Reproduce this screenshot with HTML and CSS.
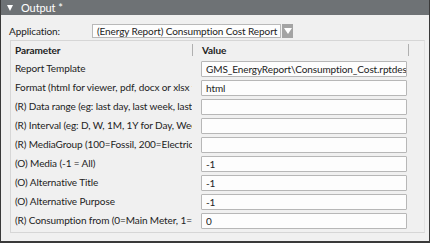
FILE: index.html
```html
<!DOCTYPE html>
<html lang="en">
<head>
<meta charset="UTF-8">
<meta name="viewport" content="width=device-width, initial-scale=1.0">
<title>Output</title>
<link rel="stylesheet" href="styles.css">
</head>
<body>

<div class="panel">
    <div class="panel-header">
        <span class="caret"></span>
        <span>Output *</span>
    </div>
    <div class="panel-body">
        <div class="app-row">
            <label class="app-label">Application:</label>
            <div class="select">
                <span class="select-text">(Energy Report) Consumption Cost Report</span>
                <span class="select-btn"><span class="select-arrow"></span></span>
            </div>
        </div>

        <div class="grid">
            <div class="grid-head">
                <div class="cell-name">Parameter</div>
                <div class="cell-value">Value</div>
            </div>
            <div class="grid-row">
                <div class="cell-name">Report Template</div>
                <div class="cell-value"><input type="text" value="GMS_EnergyReport\Consumption_Cost.rptdesign"></div>
            </div>
            <div class="grid-row">
                <div class="cell-name">Format (html for viewer, pdf, docx or xlsx for download)</div>
                <div class="cell-value"><input type="text" value="html"></div>
            </div>
            <div class="grid-row">
                <div class="cell-name">(R) Data range (eg: last day, last week, last month)</div>
                <div class="cell-value"><input type="text" value=""></div>
            </div>
            <div class="grid-row">
                <div class="cell-name">(R) Interval (eg: D, W, 1M, 1Y for Day, Week, Month, Year)</div>
                <div class="cell-value"><input type="text" value=""></div>
            </div>
            <div class="grid-row">
                <div class="cell-name">(R) MediaGroup (100=Fossil, 200=Electrical)</div>
                <div class="cell-value"><input type="text" value=""></div>
            </div>
            <div class="grid-row">
                <div class="cell-name">(O) Media (-1 = All)</div>
                <div class="cell-value"><input type="text" value="-1"></div>
            </div>
            <div class="grid-row">
                <div class="cell-name">(O) Alternative Title</div>
                <div class="cell-value"><input type="text" value="-1"></div>
            </div>
            <div class="grid-row">
                <div class="cell-name">(O) Alternative Purpose</div>
                <div class="cell-value"><input type="text" value="-1"></div>
            </div>
            <div class="grid-row">
                <div class="cell-name">(R) Consumption from (0=Main Meter, 1=Sub Meter)</div>
                <div class="cell-value"><input type="text" value="0"></div>
            </div>
        </div>
    </div>
</div>

</body>
</html>
```

FILE: styles.css
```css
body {
    margin: 0;
    padding: 0;
    font-family: Lato, "Noto Sans", sans-serif;
    font-size: 10px;
    letter-spacing: -0.1px;
    color: #222;
}
.panel {
    width: 430px;
    height: 243px;
    box-sizing: border-box;
    border: 1px solid #3a3a3a;
    border-top: none;
    border-bottom-width: 2px;
    background-color: #f0f0f0;
    display: flex;
    flex-direction: column;
}
.panel-header {
    height: 15px;
    background-color: #6e7275;
    color: #fff;
    display: flex;
    align-items: center;
    gap: 8px;
    padding-left: 6px;
    line-height: 15px;
    font-size: 11px;
}
.caret {
    width: 0;
    height: 0;
    border-left: 3.5px solid transparent;
    border-right: 3.5px solid transparent;
    border-top: 6px solid #fff;
}
.panel-body {
    flex: 1;
    padding: 9px 4px 0 8px;
}
.app-row {
    display: flex;
    align-items: center;
    height: 14px;
}
.app-label {
    width: 83px;
}
.select {
    display: flex;
    height: 14px;
}
.select-text {
    width: 189px;
    box-sizing: border-box;
    border: 1px solid #b9b9b9;
    background-color: #fdfdfd;
    padding-left: 4px;
    line-height: 12px;
    white-space: nowrap;
    overflow: hidden;
}
.select-btn {
    width: 11px;
    margin-left: 1px;
    background-color: #a3a3a3;
    display: flex;
    align-items: center;
    justify-content: center;
}
.select-arrow {
    width: 0;
    height: 0;
    border-left: 4px solid transparent;
    border-right: 4px solid transparent;
    border-top: 6px solid #fff;
}
.grid {
    margin-top: 2px;
    margin-left: 1px;
    border-top: 1px solid #d6d6d6;
    border-left: 1px solid #d6d6d6;
    border-bottom: 1px solid #d6d6d6;
    border-right: 1px solid #e2e2e2;
    padding-bottom: 2px;
}
.grid-head, .grid-row {
    display: grid;
    grid-template-columns: 190px 1fr;
}
.grid-head {
    height: 18px;
    font-weight: bold;
    align-items: center;
}
.grid-head .cell-name {
    border-right: 1px solid #b0b0b0;
    height: 12px;
    line-height: 12px;
    margin-right: 7px;
}
.grid-head .cell-value {
    display: flex;
    padding-left: 1px;
    height: 12px;
    line-height: 12px;
}
.grid-head .cell-value::after {
    content: "";
    margin-left: auto;
    margin-right: 15px;
    border-right: 1px solid #b0b0b0;
}
.grid-row {
    height: 19px;
}
.cell-name {
    padding-left: 4px;
    white-space: nowrap;
    overflow: hidden;
    width: 177px;
    line-height: 18px;
}
.cell-value input {
    margin: 2px 0 0 0;
    width: 206px;
    height: 16px;
    box-sizing: border-box;
    border: 1px solid #b7b7b7;
    border-radius: 1px;
    background-color: #fdfdfd;
    padding: 0 0 0 4px;
    font-family: inherit;
    font-size: 10px;
    letter-spacing: -0.1px;
    color: #222;
}
```
